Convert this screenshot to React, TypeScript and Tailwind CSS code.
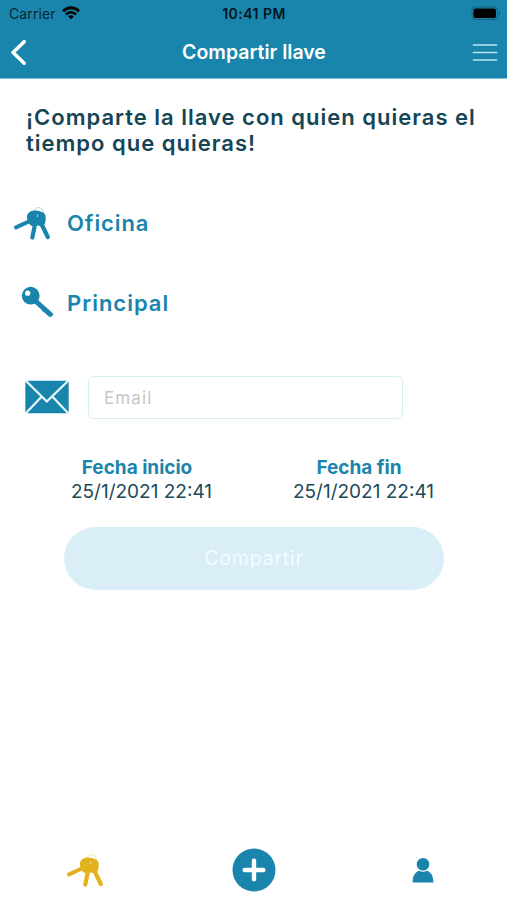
import { useState } from 'react';

const FONT = "font-['Inter','Liberation_Sans',sans-serif]";

function KeysIcon({ className }: { className: string }) {
  return (
    <svg viewBox="0 0 40 36" className={className} fill="none" stroke="currentColor">
      <circle cx="25.500" cy="6.300" r="4.700" strokeWidth="0.900" opacity="0.4" />
      <path d="M14 11.500c-.3-4 3-6.800 7.500-7 3.500-.2 5.500 1 7.500 1.500 3 .8 4 3.500 3.700 6.700 0 3.500-.8 6.800-4 7.100-2 .2-3.500-.4-5-.2-3 .8-5.700.5-7.200-1.400-1.700-1.500-2.300-3.500-2.500-6.700z" fill="currentColor" stroke="none" />
      <path d="M17 15 3 21.400" strokeWidth="4" strokeLinecap="round" />
      <path d="M22.500 16 19.300 31.500" strokeWidth="4.200" strokeLinecap="round" />
      <path d="M27.500 16 34.800 31" strokeWidth="4.200" strokeLinecap="round" />
      <path d="M24.500 8.500v2.500" stroke="white" strokeWidth="1.200" opacity="0.6" />
    </svg>
  );
}

function KeyIcon() {
  return (
    <svg viewBox="0 0 34 34" className="h-[34px] w-[34px]" fill="none" stroke="currentColor">
      <circle cx="9.700" cy="9.700" r="8.900" fill="currentColor" stroke="none" />
      <path d="M14 14.500 29.500 28.700" strokeWidth="5" />
      <path d="m22 25.500 2-2.500M28.500 30.500l3-3.300" strokeWidth="3" />
      <circle cx="6.700" cy="7.200" r="2.600" fill="white" stroke="none" />
    </svg>
  );
}

function MailIcon() {
  return (
    <svg viewBox="0 0 44 34" className="mb-px h-[34px] w-[44px]">
      <rect x="0.300" y="0.700" width="43.400" height="32.600" rx="0.800" fill="#1985ac" />
      <path d="M0 0 21.800 21.500 44 0M0 34 16.500 16.700M44 34 27.500 16.700" fill="none" stroke="#e8f8fd" strokeWidth="2.200" />
    </svg>
  );
}

function StatusBar() {
  return (
    <div className="grid h-[27px] grid-cols-3 items-center pl-[9px] pr-[6px] text-black">
      <div className="flex items-center gap-[6px]">
        <span className="text-[14px] tracking-[0.100px] text-[#08252f]">Carrier</span>
        <svg viewBox="0 0 18 14" className="mb-px h-[14px] w-[18px]" fill="none" stroke="currentColor" strokeWidth="2.800">
          <path d="M1 5.200c4.600-4.600 11.400-4.600 16 0M4 8.600c2.900-2.900 7.100-2.900 10 0" />
          <path d="m9 13.300-2.800-2.900c1.600-1.500 4-1.500 5.600 0z" fill="currentColor" stroke="none" />
        </svg>
      </div>
      <span className="whitespace-nowrap pr-[2px] text-center text-[14px] font-semibold tracking-[0.450px] text-[#03151c]">10:41 PM</span>
      <svg viewBox="0 0 30 15" className="h-[15px] w-[30px] justify-self-end">
        <rect x="1" y="1" width="25.500" height="12.500" rx="3.500" fill="none" stroke="#12617e" strokeWidth="1" />
        <rect x="2.500" y="2.600" width="22.500" height="9.300" rx="2" fill="black" />
        <path d="M28 5.200v4c1.500-.5 1.500-3.500 0-4z" fill="#12617e" />
      </svg>
    </div>
  );
}

function Header() {
  return (
    <header className="h-[79px] border-b border-[#7fc4dd] bg-[#1985ac]">
      <StatusBar />
      <div className="flex h-[51px] items-center justify-between pl-[10px] pr-[9px]">
        <button aria-label="Volver">
          <svg viewBox="0 0 26 28" className="h-[28px] w-[26px]" fill="none" stroke="white" strokeWidth="3.600" strokeLinecap="round" strokeLinejoin="round">
            <path d="M14.200 2.700 3 13.500l11.200 10.700" />
          </svg>
        </button>
        <h1 className="pt-px text-[19.500px] font-semibold text-white">Compartir llave</h1>
        <button aria-label="Menú">
          <svg viewBox="0 0 26 20" className="h-[20px] w-[26px]" stroke="#b9e6f6" strokeWidth="1.700" strokeLinecap="round">
            <path d="M1.500 2h23M1.500 9.500h23M1.500 17h23" />
          </svg>
        </button>
      </div>
    </header>
  );
}

function DateField({ label, value }: { label: string; value: string }) {
  return (
    <div className="w-[222px] text-center leading-[24px]">
      <p className="pr-[10px] text-[19px] font-bold text-[#1985ac]">{label}</p>
      <p className="pr-px text-[19px] text-[#1c4957]">{value}</p>
    </div>
  );
}

export default function App() {
  const [email, setEmail] = useState('');

  return (
    <div className={`flex h-[900px] w-[507px] flex-col overflow-hidden bg-white ${FONT}`}>
      <Header />

      <main className="flex-1">
        <h2 className="pl-[26px] pt-[25px] text-[22px] font-semibold leading-[26px] tracking-[1px] text-[#164555]">
          ¡Comparte la llave con quien quieras el
          <br />
          tiempo que quieras!
        </h2>

        <div className="mt-[50px] flex h-[36px] items-center gap-[14px] pl-[13px] text-[#1985ac]">
          <KeysIcon className="h-[36px] w-[40px]" />
          <span className="pb-px text-[22px] font-semibold tracking-[0.900px]">Oficina</span>
        </div>
        <div className="mt-[44px] flex h-[34px] items-center gap-[12px] pl-[21px] text-[#1985ac]">
          <KeyIcon />
          <span className="text-[22px] font-semibold tracking-[1px]">Principal</span>
        </div>

        {/* Email */}
        <div className="mt-[56px] flex items-center gap-[19px] pl-[25px]">
          <MailIcon />
          <input
            value={email}
            onChange={e => setEmail(e.target.value)}
            placeholder="Email"
            className="h-[43px] w-[315px] rounded-[6px] border-[1.500px] border-[#d9eef5] px-[15px] text-[17px] tracking-[1.100px] outline-none placeholder:text-[#c4c6c8]"
          />
        </div>

        {/* Fechas */}
        <div className="mt-[37px] flex pl-[31px]">
          <DateField label="Fecha inicio" value="25/1/2021 22:41" />
          <DateField label="Fecha fin" value="25/1/2021 22:41" />
        </div>

        <button className="ml-[64px] mt-[23px] h-[63px] w-[380px] rounded-full bg-[#d9eef6] text-[19.500px] tracking-[0.800px] text-[#f6fcfe]">
          Compartir
        </button>
      </main>

      <nav className="grid h-[58px] grid-cols-3 justify-items-center">
        <KeysIcon className="ml-[3px] mt-[11px] h-[36px] w-[40px] text-[#e3b21d]" />
        <svg viewBox="0 0 44 44" className="mt-[6px] h-[44px] w-[44px]">
          <circle cx="22" cy="22" r="21.500" fill="#1985ac" />
          <path d="M22 12.700v18.600M12.700 22h18.600" stroke="white" strokeWidth="4.400" strokeLinecap="round" />
        </svg>
        <svg viewBox="0 0 22 26" className="mt-[15px] h-[26px] w-[22px]" fill="#1985ac">
          <circle cx="11" cy="7.300" r="6.300" />
          <path d="M.7 25.500V24C.7 18 4 14.800 7 13.700q4 2 8 0c3 1.100 6.300 4.300 6.300 10.300v1.500z" />
        </svg>
      </nav>
    </div>
  );
}
